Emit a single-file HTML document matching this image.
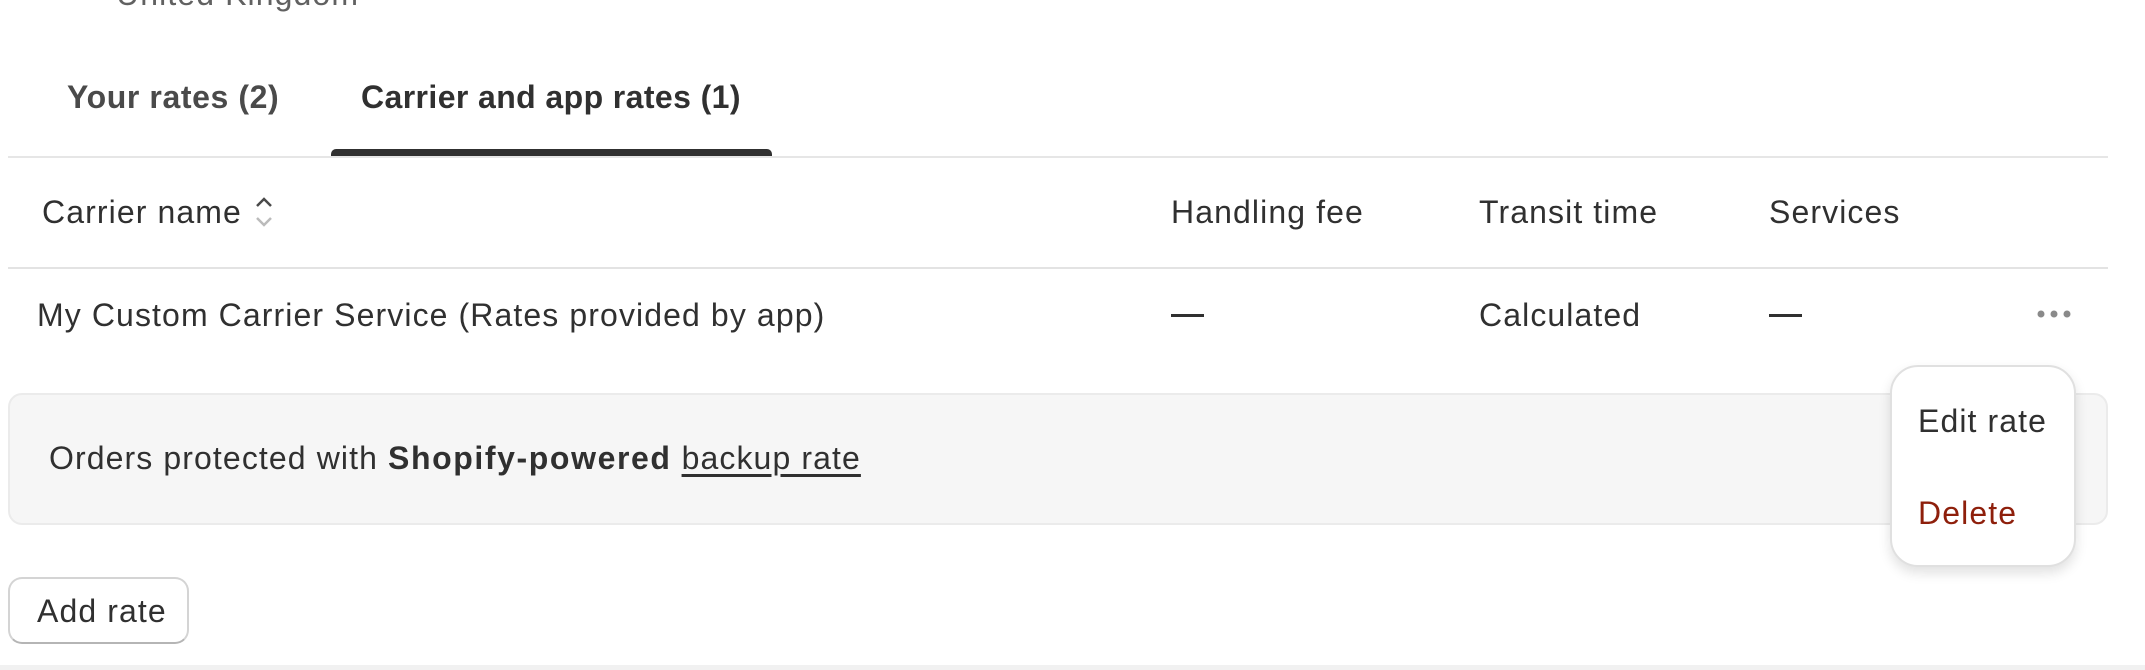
<!DOCTYPE html>
<html><head><style>
*{margin:0;padding:0;box-sizing:border-box}
body{width:2145px;height:670px;background:#fff;font-family:"Liberation Sans",sans-serif;color:#303030;position:relative;overflow:hidden;font-size:32px;letter-spacing:1.1px}
b{letter-spacing:1.6px}
.a{position:absolute;white-space:nowrap;line-height:1}
</style></head><body>
<div class="a" style="left:116px;top:-22px;color:#616161">United Kingdom</div>
<div class="a" style="left:67px;top:81px;font-weight:bold;color:#4a4a4a;letter-spacing:0.6px">Your rates (2)</div>
<div class="a" style="left:361px;top:81px;font-weight:bold;color:#303030;letter-spacing:0.4px">Carrier and app rates (1)</div>
<div style="position:absolute;left:331px;top:149px;width:441px;height:7px;background:#303030;border-radius:5px 5px 0 0"></div>
<div style="position:absolute;left:8px;top:156px;width:2100px;height:2px;background:#e6e6e6"></div>
<div class="a" style="left:42px;top:196px">Carrier name</div>
<svg style="position:absolute;left:252px;top:194px" width="24" height="36" viewBox="0 0 24 36"><path d="M5 12 L12 5 L19 12" fill="none" stroke="#4a4a4a" stroke-width="2.5"/><path d="M5 24 L12 31 L19 24" fill="none" stroke="#bbb" stroke-width="2.5"/></svg>
<div class="a" style="left:1171px;top:196px">Handling fee</div>
<div class="a" style="left:1479px;top:196px">Transit time</div>
<div class="a" style="left:1769px;top:196px">Services</div>
<div style="position:absolute;left:8px;top:267px;width:2100px;height:2px;background:#e3e3e3"></div>
<div class="a" style="left:37px;top:299px">My Custom Carrier Service (Rates provided by app)</div>
<div style="position:absolute;left:1171px;top:314px;width:33px;height:3px;background:#303030"></div>
<div class="a" style="left:1479px;top:299px">Calculated</div>
<div style="position:absolute;left:1769px;top:314px;width:33px;height:3px;background:#303030"></div>
<svg style="position:absolute;left:2036px;top:308px" width="36" height="12"><circle cx="5" cy="6" r="3.5" fill="#8a8a8a"/><circle cx="18" cy="6" r="3.5" fill="#8a8a8a"/><circle cx="31" cy="6" r="3.5" fill="#8a8a8a"/></svg>
<div style="position:absolute;left:8px;top:393px;width:2100px;height:132px;background:#f6f6f6;border:2px solid #ebebeb;border-radius:14px"></div>
<div class="a" style="left:49px;top:442px">Orders protected with <b>Shopify-powered</b> <span style="text-decoration:underline;text-underline-offset:5px">backup rate</span></div>
<div style="position:absolute;left:1890px;top:365px;width:186px;height:202px;background:#fff;border:2px solid #e0e0e0;border-radius:28px;box-shadow:0 6px 12px rgba(0,0,0,.12)"></div>
<div class="a" style="left:1918px;top:405px">Edit rate</div>
<div class="a" style="left:1918px;top:497px;color:#8e1f0b">Delete</div>
<div style="position:absolute;left:8px;top:577px;width:181px;height:67px;border:2px solid #d4d4d4;border-bottom-color:#b5b5b5;border-radius:14px;background:#fff"></div>
<div class="a" style="left:37px;top:595px">Add rate</div>
<div style="position:absolute;left:0;top:665px;width:2145px;height:5px;background:#f1f1f1"></div>
</body></html>
